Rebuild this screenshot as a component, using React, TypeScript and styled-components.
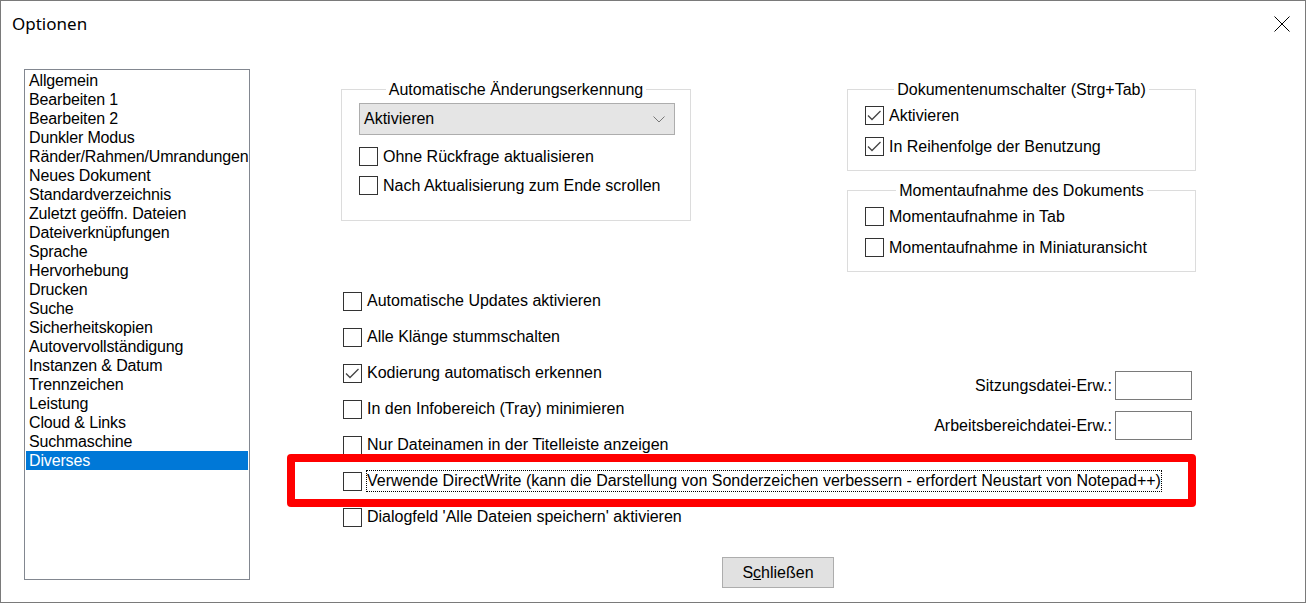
import React from "react";
import styled, { createGlobalStyle } from "styled-components";

const pages = [
  "Allgemein",
  "Bearbeiten 1",
  "Bearbeiten 2",
  "Dunkler Modus",
  "Ränder/Rahmen/Umrandungen",
  "Neues Dokument",
  "Standardverzeichnis",
  "Zuletzt geöffn. Dateien",
  "Dateiverknüpfungen",
  "Sprache",
  "Hervorhebung",
  "Drucken",
  "Suche",
  "Sicherheitskopien",
  "Autovervollständigung",
  "Instanzen & Datum",
  "Trennzeichen",
  "Leistung",
  "Cloud & Links",
  "Suchmaschine",
  "Diverses",
];

const GlobalStyle = createGlobalStyle`
  html, body {
    margin: 0;
    padding: 0;
    background: #fff;
  }
  body {
    font-family: "Liberation Sans", Arial, sans-serif;
    font-size: 16px;
    color: #000;
  }
`;

const Window = styled.div`
  box-sizing: border-box;
  width: 1306px;
  height: 603px;
  border: 1px solid #7a7a7a;
  background: #fff;
  display: flex;
  flex-direction: column;
  overflow: hidden;
`;

const TitleBar = styled.div`
  height: 45px;
  flex-shrink: 0;
  display: flex;
  align-items: center;
  justify-content: space-between;
  padding: 0 15px 0 11px;
`;

const Title = styled.div`
  font-family: "Noto Sans", "Open Sans", sans-serif;
  font-size: 17px;
  color: #000;
`;

const Body = styled.div`
  display: flex;
  align-items: flex-start;
  padding: 23px 0 0 23px;
`;

const ListBox = styled.div`
  box-sizing: border-box;
  width: 226px;
  height: 511px;
  border: 1px solid #828790;
  padding: 1px;
  flex-shrink: 0;
`;

const ListItem = styled.div<{ $selected?: boolean }>`
  height: 19px;
  line-height: 19px;
  padding-left: 3px;
  letter-spacing: -0.15px;
  white-space: nowrap;
  overflow: hidden;
  background: ${(p) => (p.$selected ? "#0078d7" : "transparent")};
  color: ${(p) => (p.$selected ? "#fff" : "#000")};
`;

const Panel = styled.div`
  display: flex;
  flex-direction: column;
  padding: 11px 0 0 91px;
`;

const TopRow = styled.div`
  display: flex;
  align-items: flex-start;
  gap: 156px;
`;

const Column = styled.div`
  display: flex;
  flex-direction: column;
  gap: 10px;
`;

const Group = styled.fieldset<{ $w: number; $pt: number; $pb: number }>`
  box-sizing: border-box;
  width: ${(p) => p.$w}px;
  margin: 0;
  min-width: 0;
  padding: ${(p) => p.$pt}px 17px ${(p) => p.$pb}px;
  border: 1px solid #dcdcdc;
`;

const Legend = styled.legend`
  margin: 0 auto;
  padding: 0 3px;
  line-height: 19px;
`;

const Combo = styled.div`
  box-sizing: border-box;
  width: 316px;
  height: 32px;
  background: #e5e5e5;
  border: 1px solid #adadad;
  display: flex;
  align-items: center;
  justify-content: space-between;
  padding: 0 9px 0 4px;
  margin-bottom: 7px;
`;

const CheckRow = styled.div<{ $h: number }>`
  position: relative;
  height: ${(p) => p.$h}px;
  display: flex;
  align-items: center;
  white-space: nowrap;
`;

const Box = styled.span`
  box-sizing: border-box;
  width: 19px;
  height: 19px;
  border: 1px solid #333;
  background: #fff;
  margin-right: 5px;
  flex-shrink: 0;
  display: flex;
`;

const FocusText = styled.span`
  line-height: 20px;
  border: 1px dotted #000;
  margin-left: -1px;
`;

const Highlight = styled.div`
  position: absolute;
  box-sizing: border-box;
  left: -56px;
  top: -9px;
  width: 909px;
  height: 53px;
  border: 8px solid #ff0000;
  border-radius: 4px;
  pointer-events: none;
`;

const MiddleRow = styled.div`
  display: flex;
  width: 855px;
  margin-top: 11px;
`;

const CheckList = styled.div`
  flex: 1;
  min-width: 0;
  display: flex;
  flex-direction: column;
  padding-left: 2px;
`;

const Fields = styled.div`
  flex-shrink: 0;
  margin: 88px 4px 0 0;
  display: flex;
  flex-direction: column;
  align-items: flex-end;
  gap: 11px;
`;

const FieldRow = styled.label`
  display: flex;
  align-items: center;
  gap: 3px;
  white-space: nowrap;
`;

const TextInput = styled.div`
  box-sizing: border-box;
  width: 77px;
  height: 29px;
  border: 1px solid #7a7a7a;
  background: #fff;
`;

const Button = styled.div`
  box-sizing: border-box;
  width: 112px;
  height: 31px;
  margin: 22px 0 0 381px;
  background: #e1e1e1;
  border: 1px solid #adadad;
  display: flex;
  align-items: center;
  justify-content: center;
`;

const Check = ({ checked, children, h, focus }: { checked?: boolean; children: React.ReactNode; h: number; focus?: boolean }) => (
  <CheckRow $h={h}>
    <Box>
      {checked && (
        <svg width="17" height="17" viewBox="0 0 17 17">
          <polyline points="2,8.5 6,12.5 14.5,4" fill="none" stroke="#444" strokeWidth="1.3" />
        </svg>
      )}
    </Box>
    {focus ? <FocusText>{children}</FocusText> : <span>{children}</span>}
    {focus && <Highlight />}
  </CheckRow>
);

export default function App() {
  return (
    <>
      <GlobalStyle />
      <Window>
        <TitleBar>
          <Title>Optionen</Title>
          <svg width="16" height="16" viewBox="0 0 16 16">
            <path d="M0.5 0.5 L15.5 15.5 M15.5 0.5 L0.5 15.5" stroke="#000" strokeWidth="1" />
          </svg>
        </TitleBar>
        <Body>
          <ListBox>
            {pages.map((p) => (
              <ListItem key={p} $selected={p === "Diverses"}>
                {p}
              </ListItem>
            ))}
          </ListBox>
          <Panel>
            <TopRow>
              <Group $w={350} $pt={4} $pb={20}>
                <Legend>Automatische Änderungserkennung</Legend>
                <Combo>
                  <span>Aktivieren</span>
                  <svg width="12" height="7" viewBox="0 0 12 7">
                    <polyline points="0.5,0.5 6,6 11.5,0.5" fill="none" stroke="#777" strokeWidth="1" />
                  </svg>
                </Combo>
                <Check h={29}>Ohne Rückfrage aktualisieren</Check>
                <Check h={29}>Nach Aktualisierung zum Ende scrollen</Check>
              </Group>
              <Column>
                <Group $w={349} $pt={1} $pb={8}>
                  <Legend>Dokumentenumschalter (Strg+Tab)</Legend>
                  <Check h={31} checked>Aktivieren</Check>
                  <Check h={31} checked>In Reihenfolge der Benutzung</Check>
                </Group>
                <Group $w={349} $pt={1} $pb={8}>
                  <Legend>Momentaufnahme des Dokuments</Legend>
                  <Check h={31}>Momentaufnahme in Tab</Check>
                  <Check h={31}>Momentaufnahme in Miniaturansicht</Check>
                </Group>
              </Column>
            </TopRow>
            <MiddleRow>
              <CheckList>
                <Check h={36}>Automatische Updates aktivieren</Check>
                <Check h={36}>Alle Klänge stummschalten</Check>
                <Check h={36} checked>Kodierung automatisch erkennen</Check>
                <Check h={36}>In den Infobereich (Tray) minimieren</Check>
                <Check h={36}>Nur Dateinamen in der Titelleiste anzeigen</Check>
                <Check h={36} focus>
                  Verwende DirectWrite (kann die Darstellung von Sonderzeichen verbessern - erfordert Neustart von Notepad++)
                </Check>
                <Check h={36}>Dialogfeld 'Alle Dateien speichern' aktivieren</Check>
              </CheckList>
              <Fields>
                <FieldRow>
                  Sitzungsdatei-Erw.:
                  <TextInput />
                </FieldRow>
                <FieldRow>
                  Arbeitsbereichdatei-Erw.:
                  <TextInput />
                </FieldRow>
              </Fields>
            </MiddleRow>
            <Button>
              S<u>c</u>hließen
            </Button>
          </Panel>
        </Body>
      </Window>
    </>
  );
}
